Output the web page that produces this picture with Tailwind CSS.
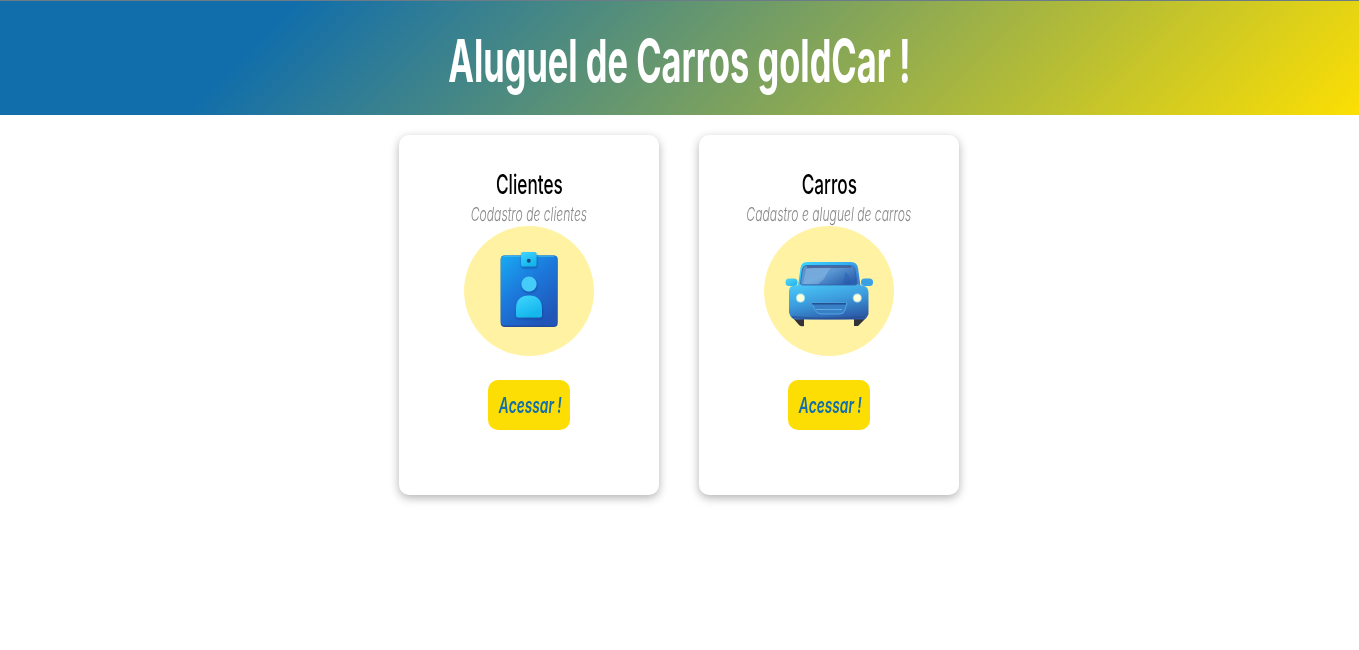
<!DOCTYPE html>
<html lang="pt-BR">
<head>
<meta charset="utf-8">
<title>goldCar</title>
<script src="https://cdn.jsdelivr.net/npm/@tailwindcss/browser@4"></script>
</head>
<body class="h-screen overflow-hidden bg-white font-['Inter','Liberation_Sans',sans-serif]">
<header class="flex h-[115px] justify-center border-t border-[#6b7b88] bg-[linear-gradient(135deg,#116eab_20%,#fcdf03)] pt-[24px]">
  <h1 class="w-[460px] flex justify-center whitespace-nowrap text-[59px] leading-[72px] font-bold text-white"><span class="inline-block scale-x-[0.583]">Aluguel de Carros goldCar !</span></h1>
</header>
<main class="flex w-[1358px] justify-center gap-10 pt-5">
  <section class="flex h-[360px] w-[260px] flex-col items-center rounded-[10px] bg-white pt-[34px] shadow-[0_3px_10px_rgba(0,0,0,0.3)]">
    <h2 class="flex h-8 w-[66px] justify-center whitespace-nowrap text-[27px] leading-8 font-medium text-black"><span class="inline-block scale-x-[0.638]">Clientes</span></h2>
    <p class="flex h-[25px] w-[117px] justify-center whitespace-nowrap text-[19px] leading-7 font-light text-[#888888] italic"><span class="inline-block scale-x-[0.64]">Codastro de clientes</span></p>
    <div class="size-[130px] rounded-full bg-[#fff3a3]">
      <svg viewBox="0 0 130 130" class="size-full">
        <defs>
          <linearGradient id="badge" x1="0" y1="0" x2=".7" y2="1"><stop stop-color="#18abf2"/><stop offset=".5" stop-color="#1c78db"/><stop offset="1" stop-color="#2155b8"/></linearGradient>
          <linearGradient id="light" x1="0" y1="0" x2=".5" y2="1"><stop stop-color="#43d6ff"/><stop offset="1" stop-color="#12b5ec"/></linearGradient>
          <filter id="soft" x="-30%" y="-30%" width="160%" height="170%"><feDropShadow dx="0.5" dy="1.5" stdDeviation="1" flood-color="#123a91" flood-opacity=".65"/></filter>
        </defs>
        <rect x="36.7" y="29.5" width="57" height="71.5" rx="4" fill="#234c9f"/>
        <rect x="36.7" y="29.5" width="56.5" height="70" rx="4" fill="url(#badge)"/>
        <path d="M40 30.2H90" stroke="#49c5f8" stroke-width=".8"/>
        <rect x="57" y="26" width="15.5" height="14.5" rx="2" fill="url(#light)" filter="url(#soft)"/>
        <circle cx="64.8" cy="34.7" r="2" fill="#164b87"/>
        <circle cx="65" cy="58" r="7.6" fill="#45ccf8" filter="url(#soft)"/>
        <path d="M52 83q0-13.5 13-13.5T78 83v6.5q0 2-2 2H54q-2 0-2-2Z" fill="url(#light)" filter="url(#soft)"/>
      </svg>
    </div>
    <a class="mt-6 flex h-[50px] w-[82px] items-center justify-center rounded-[10px] bg-[#fcdd04] pt-px pl-[3px] text-[22px] font-semibold whitespace-nowrap text-[#116eab] italic"><span class="inline-block scale-x-[0.625]">Acessar !</span></a>
  </section>
  <section class="flex h-[360px] w-[260px] flex-col items-center rounded-[10px] bg-white pt-[34px] shadow-[0_3px_10px_rgba(0,0,0,0.3)]">
    <h2 class="flex h-8 w-[66px] justify-center whitespace-nowrap text-[27px] leading-8 font-medium text-black"><span class="inline-block scale-x-[0.638]">Carros</span></h2>
    <p class="flex h-[25px] w-[164px] justify-center whitespace-nowrap text-[19px] leading-7 font-light text-[#888888] italic"><span class="inline-block scale-x-[0.64]">Cadastro e aluguel de carros</span></p>
    <div class="size-[130px] rounded-full bg-[#fff3a3]">
      <svg viewBox="0 0 130 130" class="size-full">
        <defs>
          <linearGradient id="body" x1=".2" y1="0" x2=".6" y2="1"><stop stop-color="#4ac8f8"/><stop offset=".5" stop-color="#3c9cdd"/><stop offset="1" stop-color="#2d5ca9"/></linearGradient>
          <linearGradient id="roof" x1="0" y1="0" x2="1" y2=".6"><stop stop-color="#3bd8ff"/><stop offset=".6" stop-color="#35aef1"/><stop offset="1" stop-color="#3d83d3"/></linearGradient>
          <linearGradient id="glass" x1="0" y1="0" x2="1" y2=".7"><stop stop-color="#5c91cb"/><stop offset=".5" stop-color="#5a98d3"/><stop offset="1" stop-color="#2c60ae"/></linearGradient>
          <linearGradient id="mirror" x1="0" y1="0" x2="1" y2="1"><stop stop-color="#55d9f7"/><stop offset="1" stop-color="#1faee8"/></linearGradient>
        </defs>
        <path d="M29 90h11v10q-3 1-5-1l-6-7ZM90 90h13l-2 3-7 7h-4Z" fill="#333238"/>
        <rect x="21.5" y="52.5" width="12" height="7.5" rx="3.5" fill="url(#mirror)"/>
        <rect x="97" y="52.5" width="12" height="7.5" rx="3.5" fill="#3aa0e6"/>
        <path d="M34 60l2.500-18q.7-6 6.500-6h44q6 0 7 6l2.500 18Z" fill="url(#roof)"/>
        <path d="M28 60q9-1 11-3h52q3 2 9 3 4 1 4.500 6v22q-2 5.500-6 5.500H32q-5 0-7-7V66q0-5 3-6Z" fill="url(#body)"/>
        <path d="M36.500 57l2-14q.6-3.500 4.200-3.500h44q3.500 0 4.200 3.500L93 57q0 2-2 2H38.500q-2 0-2-2Z" fill="url(#glass)" stroke="#315fa5" stroke-width=".8"/>
        <path d="M42 43l17-2.500h10Q64 44 60 53l-6 5H39Z" fill="#a8cff0" opacity=".35"/>
        <path d="M79 58l2-12q4 0 6 12Z" fill="#2355ac" opacity=".35"/>
        <path d="M43 41H87" stroke="#41588e" stroke-width="1.300"/>
        <path d="M28 91q35 3 73 0" stroke="#274a8d" stroke-width="2" fill="none" opacity=".6"/>
        <path d="M48 77h35l-2 7q-1 4-5 4H57q-4 0-6-4Z" fill="#397fc6" stroke="#55a9e6" stroke-width=".9"/>
        <path d="M48 77.700h34" stroke="#244f91" stroke-width="1.500"/>
        <path d="M52 83.500h26" stroke="#65b9ee" stroke-width=".8"/>
        <circle cx="36.500" cy="72" r="4.700" fill="#8ddcf0"/><circle cx="36.500" cy="72" r="3.700" fill="#ffffd9"/>
        <circle cx="93.300" cy="72" r="4.700" fill="#85c8e8"/><circle cx="93.300" cy="72" r="3.700" fill="#ffffd9"/>
      </svg>
    </div>
    <a class="mt-6 flex h-[50px] w-[82px] items-center justify-center rounded-[10px] bg-[#fcdd04] pt-px pl-[3px] text-[22px] font-semibold whitespace-nowrap text-[#116eab] italic"><span class="inline-block scale-x-[0.625]">Acessar !</span></a>
  </section>
</main>
</body>
</html>
